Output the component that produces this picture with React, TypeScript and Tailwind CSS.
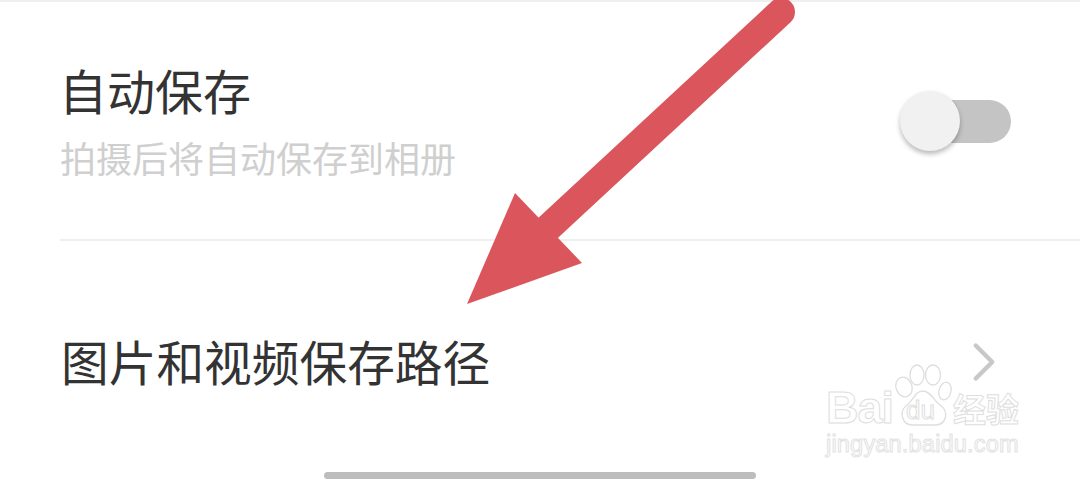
import { ChevronRight } from "lucide-react";

const cjk = "font-['Noto_Sans_CJK_SC',sans-serif]";

function Toggle() {
  return (
    <div className="relative flex h-[60px] w-[111px] items-center justify-end">
      <div className="h-[43px] w-[80px] rounded-full bg-[#c4c4c4]" />
      <div className="absolute left-0 top-0 h-[60px] w-[60px] rounded-full bg-[#f1f1f1] shadow-[0_3px_5px_rgba(0,0,0,0.28)]" />
    </div>
  );
}

// 红色箭头,标注在截图上
function Arrow() {
  return (
    <svg className="absolute left-0 top-0" width="1080" height="480" viewBox="0 0 1080 480">
      <path d="M781 12 L548 228" stroke="#db565c" strokeWidth="28" strokeLinecap="round" fill="none" />
      <polygon points="467,304 515,193 582,263" fill="#db565c" />
    </svg>
  );
}

function Watermark() {
  const outline = "text-transparent [-webkit-text-stroke:1px_#dedede] font-['Liberation_Sans',sans-serif]";
  return (
    <div className="absolute left-[826px] top-[362px] flex w-[200px] flex-col">
      <div className="flex h-[66px] items-end">
        <span className={`${outline} text-[45px] font-bold leading-[40px] tracking-[-1px]`}>Bai</span>
        <div className="relative h-[66px] w-[60px] shrink-0">
          <svg width="60" height="66" viewBox="0 0 60 66" fill="none" stroke="#dedede" strokeWidth="1.3">
            <ellipse cx="11" cy="25" rx="8" ry="10" transform="rotate(-20 11 25)" />
            <ellipse cx="24" cy="13" rx="7" ry="10" />
            <ellipse cx="40" cy="13" rx="7.5" ry="10" />
            <ellipse cx="52" cy="29" rx="6" ry="9" transform="rotate(15 52 29)" />
            <path d="M30 29 C22 29 20 39 14 43 C6 49 8 63 20 63 L42 63 C54 63 56 49 47 43 C41 39 38 29 30 29 Z" />
          </svg>
          <span className="absolute bottom-[4px] left-[13px] text-[26px] font-normal leading-[28px] text-transparent [-webkit-text-stroke:1px_#dedede] font-['Liberation_Sans',sans-serif]">
            du
          </span>
        </div>
        <span className="text-[33px] font-bold leading-[40px] text-transparent [-webkit-text-stroke:1px_#dedede] font-['Noto_Sans_CJK_SC',sans-serif]">
          经验
        </span>
      </div>
      <span className="mt-[1px] whitespace-nowrap text-[23.5px] leading-[30px] tracking-[0.2px] text-transparent [-webkit-text-stroke:1px_#e2e2e2] font-['Liberation_Sans',sans-serif]">
        jingyan.baidu.com
      </span>
    </div>
  );
}

export default function App() {
  return (
    <div className={`relative flex h-[480px] w-[1080px] flex-col overflow-hidden bg-white ${cjk}`}>
      <div className="h-[2px] bg-[#efefef]" />
      <div className="ml-[60px] flex h-[239px] items-center justify-between border-b-2 border-[#efefef] pr-[69px]">
        <div className="flex flex-col">
          <span className="-ml-[1px] text-[48px] leading-[60px] text-[#333333]">自动保存</span>
          <span className="mt-[13px] text-[36px] leading-[50px] text-[#cfcfcf]">拍摄后将自动保存到相册</span>
        </div>
        <div className="mt-[1px]">
          <Toggle />
        </div>
      </div>
      <div className="ml-[61px] flex h-[231px] items-center justify-between pr-[63px] pt-[9px]">
        <span className="text-[47.7px] leading-[60px] text-[#333333]">图片和视频保存路径</span>
        <ChevronRight className="mt-[2px] h-[66px] w-[66px] text-[#c8c8c8]" strokeWidth={1.6} />
      </div>
      <div className="mx-auto h-[7px] w-[432px] rounded-full bg-[#bdbdbd]" />
      <Arrow />
      <Watermark />
    </div>
  );
}
